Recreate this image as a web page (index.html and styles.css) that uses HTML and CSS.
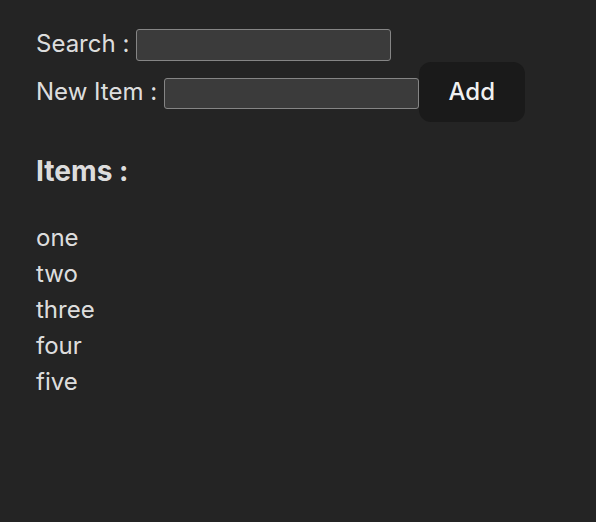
FILE: index.html
```html
<!DOCTYPE html>
<html lang="en">
<head>
<meta charset="utf-8">
<title>Items</title>
<link rel="stylesheet" href="styles.css">
</head>
<body>
<div class="app">
  <div class="row">Search : <input class="field" type="text"></div>
  <div class="row">New Item : <input class="field" type="text"><button class="btn">Add</button></div>
  <h3 class="title">Items :</h3>
  <div class="item">one</div>
  <div class="item">two</div>
  <div class="item">three</div>
  <div class="item">four</div>
  <div class="item">five</div>
</div>
</body>
</html>
```
FILE: styles.css
```css
html, body {
  margin: 0;
  padding: 0;
  background: #242424;
}
body {
  font-family: Inter, "Noto Sans", sans-serif;
  font-size: 24px;
  line-height: 1.5;
  color: rgba(255, 255, 255, 0.87);
  min-height: 522px;
}
.app {
  padding: 26px 36px;
}
.row {
  white-space: nowrap;
}
.field {
  box-sizing: border-box;
  width: 254.8px;
  height: 31.5px;
  font-size: 20px;
  font-family: Inter, sans-serif;
  padding: 1px 3px;
  margin: 0;
  background: #3b3b3b;
  border: 1px solid #858585;
  border-radius: 3px;
  color: #fff;
  vertical-align: baseline;
}
.btn {
  font-family: Inter, sans-serif;
  font-size: 24px;
  font-weight: 500;
  line-height: normal;
  padding: 14.4px 28.8px;
  border: 1px solid transparent;
  border-radius: 12px;
  background: #1a1a1a;
  color: rgba(255, 255, 255, 0.95);
  margin: 0;
  cursor: pointer;
}
.title {
  font-size: 28.08px;
  font-weight: 700;
  margin: 28.08px 0;
}
.item {
  line-height: 36px;
}
```
